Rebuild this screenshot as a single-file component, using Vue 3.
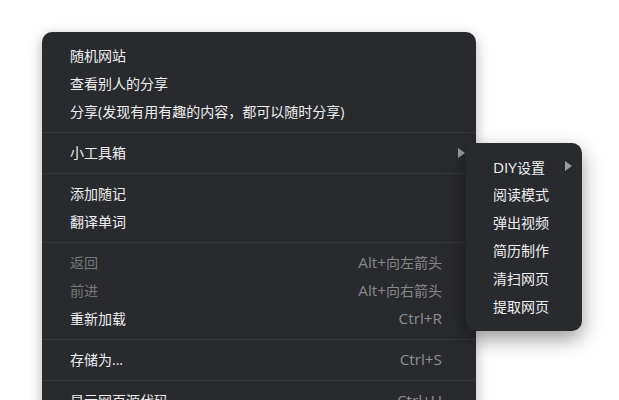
<script setup>
// Dark context menu with the toolbox submenu opened
const groups = [
  { items: [{ label: '随机网站' }, { label: '查看别人的分享' }, { label: '分享(发现有用有趣的内容，都可以随时分享)' }] },
  { items: [{ label: '小工具箱', arrow: true }] },
  { items: [{ label: '添加随记' }, { label: '翻译单词' }] },
  {
    items: [
      { label: '返回', latin: 'Alt+', key: '向左箭头', disabled: true },
      { label: '前进', latin: 'Alt+', key: '向右箭头', disabled: true },
      { label: '重新加载', latin: 'Ctrl+R' },
    ],
  },
  { items: [{ label: '存储为...', latin: 'Ctrl+S' }] },
  { items: [{ label: '显示网页源代码', latin: 'Ctrl+U' }] },
]

const subItems = [
  { latin: 'DIY', label: '设置', arrow: true },
  { label: '阅读模式' },
  { label: '弹出视频' },
  { label: '简历制作' },
  { label: '清扫网页' },
  { label: '提取网页' },
]
</script>

<template>
  <div class="page">
    <div class="menu">
      <div v-for="(group, i) in groups" :key="i" class="group">
        <div v-for="item in group.items" :key="item.label" class="row" :class="{ disabled: item.disabled }">
          <span class="label">{{ item.label }}</span>
          <span v-if="item.latin" class="key"><span class="latin">{{ item.latin }}</span>{{ item.key }}</span>
          <span v-if="item.arrow" class="arrow"></span>
        </div>
      </div>

      <div class="submenu">
        <div v-for="item in subItems" :key="item.label" class="sub-row">
          <span class="label"><span v-if="item.latin" class="latin">{{ item.latin }}</span>{{ item.label }}</span>
          <span v-if="item.arrow" class="arrow"></span>
        </div>
      </div>
    </div>
  </div>
</template>

<style scoped>
.page {
  width: 619px;
  height: 400px;
  overflow: hidden;
  background: #fff;
  padding: 32px 0 0 42px;
  box-sizing: border-box;
  font-family: "Open Sans", "Noto Sans CJK SC", sans-serif;
  font-size: 14px;
  color: #eeeff1;
}
.menu {
  position: relative;
  width: 434px;
  background: #292a2d;
  border-radius: 10px 10px 0 0;
  padding-top: 10px;
  padding-bottom: 40px;
  box-shadow: 0 4px 14px rgba(0, 0, 0, 0.3);
}
.group {
  padding: 0 0 6px;
  margin-bottom: 5.95px;
  border-bottom: 1px solid #37383b;
}
.row {
  display: flex;
  align-items: center;
  justify-content: space-between;
  height: 28px;
  padding: 0 34px 0 28px;
}
.label,
.key {
  line-height: 28px;
  white-space: nowrap;
}
.latin {
  font-size: 15.3px;
}
.row .arrow {
  margin-right: -23px;
}
.row.disabled {
  color: #77787b;
}
.key {
  color: #8e8f92;
}
.row.disabled .key {
  color: #868789;
}
.arrow {
  width: 0;
  height: 0;
  border-top: 5px solid transparent;
  border-bottom: 5px solid transparent;
  border-left: 7px solid #9a9b9e;
}
.submenu {
  position: absolute;
  left: 424px;
  top: 111px;
  width: 116px;
  height: 188px;
  box-sizing: border-box;
  padding-top: 10px;
  background: #292a2d;
  border-radius: 10px;
  box-shadow: 0 8px 20px rgba(0, 0, 0, 0.4);
}
.sub-row {
  display: flex;
  align-items: center;
  justify-content: space-between;
  height: 28px;
  padding: 0 10px 0 27px;
}
.sub-row .arrow {
  margin-bottom: 2px;
}
</style>
